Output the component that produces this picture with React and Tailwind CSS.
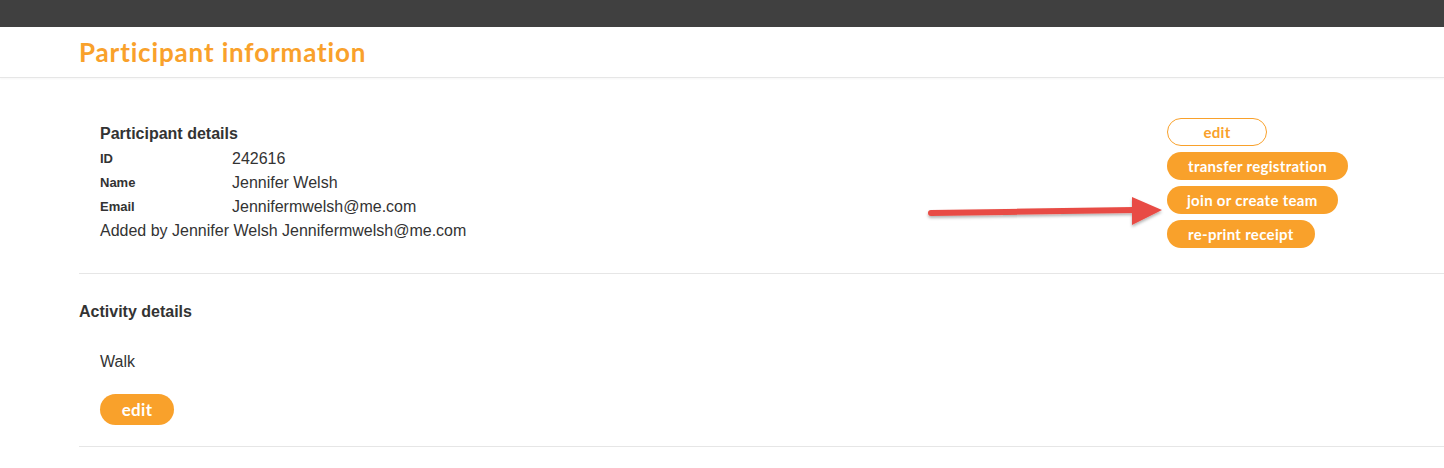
import React from 'react';

const orange = 'bg-[#f9a12b]';

const PillButton = ({ children, outline = false, className = '' }) => (
  <button
    className={`rounded-full font-['Lato',sans-serif] font-bold leading-none tracking-[0.3px] ${
      outline
        ? 'border border-[#f9a12b] bg-white text-[#f9a12b]'
        : `${orange} text-white`
    } ${className}`}
  >
    {children}
  </button>
);

const DetailRow = ({ label, value }) => (
  <div className="flex h-6 items-center">
    <span className="w-[132px] text-[13px] font-bold text-[#333]">{label}</span>
    <span className="text-[16px] text-[#333]">{value}</span>
  </div>
);

const Arrow = () => (
  <svg
    className="absolute left-[922px] top-[192px]"
    width="250"
    height="40"
    viewBox="0 0 250 40"
  >
    <defs>
      <filter id="sh" x="-10%" y="-50%" width="120%" height="200%">
        <feDropShadow dx="0" dy="2" stdDeviation="1.5" floodColor="#000" floodOpacity="0.3" />
      </filter>
    </defs>
    <g filter="url(#sh)">
      <line x1="9" y1="21" x2="212" y2="18" stroke="#e84c44" strokeWidth="6" strokeLinecap="round" />
      <polygon points="210,5 240,18 210,33" fill="#e84c44" />
    </g>
  </svg>
);

export default function App() {
  return (
    <div className="relative min-h-[468px] bg-white font-['Liberation_Sans',Arial,sans-serif]">
      {/* top bar */}
      <div className="h-[27px] bg-[#404040]" />

      {/* page header */}
      <div className="flex h-[51px] items-center border-b border-[#e6e6e6] pl-[79px] shadow-[0_1px_2px_rgba(0,0,0,0.04)]">
        <h1 className="font-['Lato',sans-serif] text-[26px] font-bold tracking-[0.85px] text-[#f9a12b]">
          Participant information
        </h1>
      </div>

      <div className="ml-[79px]">
        {/* participant details */}
        <div className="flex border-b border-[#e6e6e6] pb-[25px] pt-[40px]">
          <div className="flex-1 pl-[21px] pt-[4px]">
            <h2 className="mb-[1px] text-[16px] font-bold leading-6 text-[#333]">Participant details</h2>
            <DetailRow label="ID" value="242616" />
            <DetailRow label="Name" value="Jennifer Welsh" />
            <DetailRow label="Email" value="Jennifermwelsh@me.com" />
            <div className="flex h-6 items-center text-[16px] text-[#333]">
              Added by Jennifer Welsh Jennifermwelsh@me.com
            </div>
          </div>
          <div className="mr-[94px] flex w-[183px] flex-col items-start gap-[6px]">
            <PillButton outline className="h-[28px] w-[100px] text-[15px]">edit</PillButton>
            <PillButton className="h-[28px] px-[21px] text-[15px]">transfer registration</PillButton>
            <PillButton className="h-[28px] px-[20px] text-[15px]">join or create team</PillButton>
            <PillButton className="h-[28px] px-[21px] text-[15px]">re-print receipt</PillButton>
          </div>
        </div>

        {/* activity details */}
        <div className="border-b border-[#e6e6e6] pb-[21px] pt-[26px]">
          <h2 className="text-[16px] font-bold leading-6 text-[#333]">Activity details</h2>
          <div className="pl-[21px]">
            <p className="mt-[26px] text-[16px] leading-6 text-[#333]">Walk</p>
            <PillButton className="mt-[20px] h-[31px] w-[74px] text-[17px]">edit</PillButton>
          </div>
        </div>
      </div>

      <Arrow />
    </div>
  );
}
